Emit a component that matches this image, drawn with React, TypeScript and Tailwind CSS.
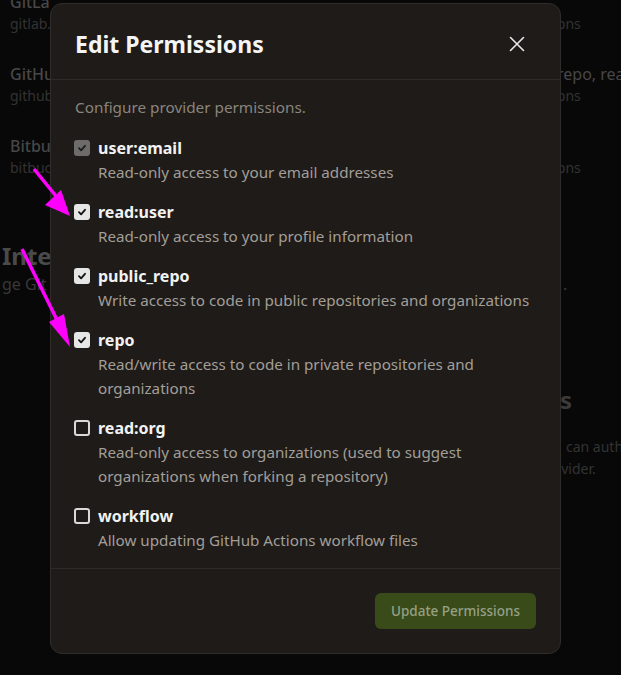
import React from "react";

const items = [
  { label: "user:email", desc: "Read-only access to your email addresses", state: "disabled" },
  { label: "read:user", desc: "Read-only access to your profile information", state: "checked" },
  { label: "public_repo", desc: "Write access to code in public repositories and organizations", state: "checked" },
  { label: "repo", desc: "Read/write access to code in private repositories and organizations", state: "checked" },
  { label: "read:org", desc: "Read-only access to organizations (used to suggest organizations when forking a repository)", state: "unchecked" },
  { label: "workflow", desc: "Allow updating GitHub Actions workflow files", state: "unchecked" },
];

function Check({ state }: { state: string }) {
  if (state === "unchecked") {
    return <div className="mt-1 h-4 w-4 shrink-0 rounded-[3px] border-2 border-[#d9d9d9]" />;
  }
  const bg = state === "disabled" ? "bg-[#6e6c6a]" : "bg-[#e6e6e6]";
  const stroke = state === "disabled" ? "#1e1d1c" : "#111111";
  return (
    <div className={`mt-1 flex h-4 w-4 shrink-0 items-center justify-center rounded-[3px] ${bg}`}>
      <svg width="10" height="10" viewBox="0 0 10 10" fill="none">
        <path d="M2 5.2 L4.1 7.3 L8 2.8" stroke={stroke} strokeWidth="1.8" strokeLinecap="round" strokeLinejoin="round" />
      </svg>
    </div>
  );
}

export default function App() {
  return (
    <div
      className="relative h-[675px] w-[621px] overflow-hidden bg-[#080808]"
      style={{ fontFamily: '"Noto Sans", "Open Sans", sans-serif' }}
    >
      {/* background page */}
      <div className="-mt-[10px] flex flex-col text-[#474747]">
        {[
          ["GitLab", "gitlab.com", "", "ons"],
          ["GitHub", "github.com", "repo, read:org", "ons"],
          ["Bitbucket", "bitbucket.org", "", "ons"],
        ].map(([t, s, r1, r2], i) => (
          <div key={i} className="flex h-[72px]">
            <div className="w-[557px] shrink-0 pl-[10px]">
              <div className="w-[40px] overflow-hidden whitespace-nowrap">
                <div className="text-base font-medium leading-6">{t}</div>
                <div className="text-sm leading-5 text-[#333333]">{s}</div>
              </div>
            </div>
            <div className="overflow-hidden whitespace-nowrap">
              <div className="h-6 text-base leading-6">{r1}</div>
              <div className="text-sm leading-5 text-[#333333]">{r2}</div>
            </div>
          </div>
        ))}
        <div className="mt-[34px] flex">
          <div className="w-[557px] shrink-0 pl-[2px]">
            <div className="w-[48px] overflow-hidden whitespace-nowrap">
              <div className="text-2xl font-bold leading-8 text-[#4a4a4a]">Integrations</div>
              <div className="text-base leading-6 text-[#383838]">ge Git providers</div>
            </div>
          </div>
          <div className="pt-8 pl-[6px] text-base leading-6 text-[#383838]">.</div>
        </div>
        <div className="mt-[88px] flex">
          <div className="w-[557px] shrink-0" />
          <div className="whitespace-nowrap">
            <div className="pl-[3px] text-2xl font-bold leading-8 text-[#3a3a3a]">s</div>
            <div className="mt-[20px] pl-[9px] text-sm leading-[22px] text-[#333333]">can auth</div>
            <div className="-ml-[4px] text-sm leading-[22px] text-[#333333]">ovider.</div>
          </div>
        </div>
      </div>

      {/* modal */}
      <div className="absolute left-[50px] top-[3px] flex w-[511px] flex-col rounded-xl border border-[#2f2c29] bg-[#1e1b18]">
        <div className="flex items-center justify-between border-b border-[#2d2a27] pl-6 pr-6 pb-[19px] pt-6">
          <h2 className="text-[23px] font-bold leading-8 text-[#f5f5f5]">Edit Permissions</h2>
          <button className="mr-[7px] flex h-6 w-6 items-center justify-center">
            <svg width="16" height="16" viewBox="0 0 16 16" fill="none">
              <path d="M1.5 1.5 L14.5 14.5 M14.5 1.5 L1.5 14.5" stroke="#e8e8e8" strokeWidth="1.6" strokeLinecap="round" />
            </svg>
          </button>
        </div>
        <div className="flex flex-col pl-[23px] pr-6 pb-4 pt-[15px]">
          <p className="pl-px text-[15.3px] leading-6 text-[#8a847e]">Configure provider permissions.</p>
          <div className="mt-[17px] flex flex-col gap-4">
            {items.map((it) => (
              <div key={it.label} className="flex gap-2">
                <Check state={it.state} />
                <div className="flex flex-col">
                  <div className="text-base font-bold leading-6 text-[#f2f2f2]">{it.label}</div>
                  <div className="text-[15.2px] leading-6 text-[#a39e98]">{it.desc}</div>
                </div>
              </div>
            ))}
          </div>
        </div>
        <div className="flex justify-end border-t border-[#2d2a27] px-6 py-6">
          <button className="flex h-9 w-[161px] items-center justify-center rounded-md bg-[#394b19] text-[13.5px] font-medium text-[#95a085]">
            Update Permissions
          </button>
        </div>
      </div>

      {/* annotation arrows */}
      <svg className="pointer-events-none absolute left-0 top-0" width="621" height="675">
        <line x1="34" y1="169" x2="60" y2="201" stroke="#ff00ff" strokeWidth="3.5" />
        <polygon points="70,216 45,205 61,190" fill="#ff00ff" />
        <line x1="22" y1="249" x2="62" y2="330" stroke="#ff00ff" strokeWidth="3.5" />
        <polygon points="70,347 49,322 64,314" fill="#ff00ff" />
      </svg>
    </div>
  );
}
